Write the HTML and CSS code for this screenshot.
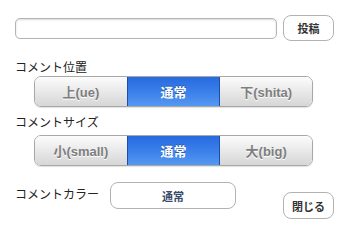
FILE: index.html
```html
<!DOCTYPE html>
<html lang="ja">
<head>
<meta charset="utf-8">
<link rel="stylesheet" href="styles.css">
</head>
<body>
<div class="page">
  <div class="top-row">
    <input class="comment-input" type="text">
    <button class="btn-small">投稿</button>
  </div>
  <div class="label label-pos">コメント位置</div>
  <div class="seg">
    <div class="seg-item">上(ue)</div>
    <div class="seg-item selected">通常</div>
    <div class="seg-item">下(shita)</div>
  </div>
  <div class="label label-size">コメントサイズ</div>
  <div class="seg seg-size">
    <div class="seg-item">小(small)</div>
    <div class="seg-item selected">通常</div>
    <div class="seg-item">大(big)</div>
  </div>
  <div class="color-row">
    <div class="label color-label">コメントカラー</div>
    <button class="color-btn">通常</button>
    <button class="btn-small close-btn">閉じる</button>
  </div>
</div>
</body>
</html>
```
FILE: styles.css
```css
html, body {
  margin: 0;
  padding: 0;
  background: #ffffff;
}
body {
  font-family: "Liberation Sans", "Noto Sans CJK JP", sans-serif;
  color: #222;
}
.page {
  width: 350px;
  box-sizing: border-box;
  padding: 15px 16px 0 15px;
}
.top-row {
  display: flex;
  align-items: center;
  height: 26px;
}
.comment-input {
  width: 262px;
  height: 21px;
  box-sizing: border-box;
  border: 1px solid #b4b4b4;
  border-radius: 5px;
  box-shadow: inset 0 1px 2px rgba(0,0,0,0.15);
  margin: 0;
  padding: 0;
  background: #fff;
}
.btn-small {
  margin: 0 0 0 6px;
  width: 51px;
  height: 26px;
  box-sizing: border-box;
  border: 1px solid #b2b2b2;
  border-radius: 8px;
  background: #fff;
  font-family: "Liberation Sans", "Noto Sans CJK JP", sans-serif;
  font-size: 11px;
  font-weight: bold;
  color: #333;
  padding: 0;
}
.label {
  font-size: 12px;
  line-height: 14px;
  color: #222;
}
.label-pos {
  margin-top: 20px;
}
.seg {
  display: flex;
  margin: 1px 0 0 19px;
  width: 279px;
  height: 31px;
  box-sizing: border-box;
  border: 1px solid #a8a8a8;
  border-radius: 7px;
  overflow: hidden;
  box-shadow: 0 1px 1px rgba(0,0,0,0.12);
}
.seg-item {
  flex: 1;
  display: flex;
  align-items: center;
  justify-content: center;
  font-size: 13px;
  font-weight: bold;
  color: #7e7e7e;
  background: linear-gradient(#fcfcfc, #e9e9e9 50%, #d6d6d6);
  text-shadow: 0 1px 0 #fff;
}
.seg-item + .seg-item {
  border-left: 1px solid #a8a8a8;
}
.seg-item.selected {
  color: #fff;
  background: linear-gradient(#286ae0, #3a7fea 50%, #5598f2);
  text-shadow: 0 -1px 0 rgba(0,0,0,0.3);
  border-left-color: #1c4fa8;
}
.seg-item.selected + .seg-item {
  border-left-color: #1c4fa8;
}
.label-size {
  margin-top: 9px;
}
.seg-size {
  margin-top: 5px;
}
.color-row {
  display: flex;
  align-items: flex-start;
  margin-top: 16px;
}
.color-label {
  margin-top: 6px;
}
.color-btn {
  margin: 0 0 0 11px;
  width: 126px;
  height: 27px;
  box-sizing: border-box;
  border: 1px solid #b2b2b2;
  border-radius: 8px;
  background: #fff;
  font-family: "Liberation Sans", "Noto Sans CJK JP", sans-serif;
  font-size: 11px;
  font-weight: bold;
  color: #3a4a6a;
  padding: 0;
}
.close-btn {
  margin: 10px 0 0 auto;
  height: 27px;
}
```
